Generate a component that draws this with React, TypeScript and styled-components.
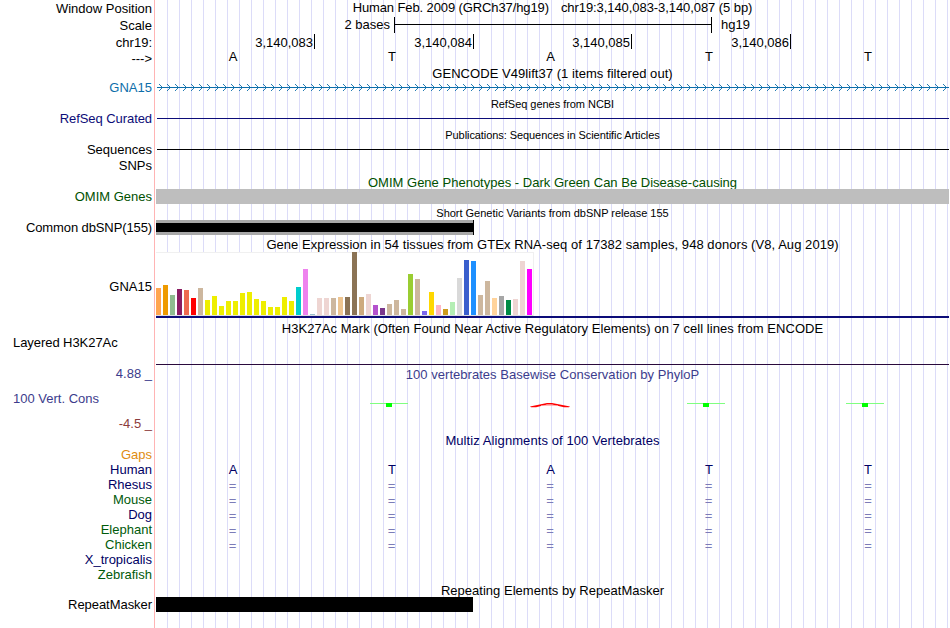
import React from 'react';
import styled, { createGlobalStyle } from 'styled-components';

const GlobalStyle = createGlobalStyle`
  body {
    margin: 0;
    background: #fff;
    overflow: hidden;
  }
`;

const COLORS = {
  gencode: '#0c6eaa',
  navy: '#0c0c78',
  species: '#000064',
  green: '#005a0a',
  omim: '#005000',
  gaps: '#e08c10',
  phylo: '#3c3c8c',
  phyloNeg: '#8c3c3c',
};

const Browser = styled.main`
  display: grid;
  grid-template-columns: 154px 1px 1px 793px;
  width: 950px;
  height: 628px;
  font: 13px/15px 'Liberation Sans', Arial, sans-serif;
  color: #000;
  white-space: pre;
`;

const LabelColumn = styled.div`
  display: flex;
  flex-direction: column;
`;

const Divider = styled.div`
  background: #ffb4b4;
`;

const TrackColumn = styled.div`
  grid-column: 4;
  display: flex;
  flex-direction: column;
  min-width: 0;
  background: repeating-linear-gradient(90deg, transparent 0 11px, #dcdcf8 11px 12px);
`;

const Label = styled.div<{ $gap?: number; $color?: string; $left?: boolean; $spacing?: number }>`
  flex: none;
  height: 15px;
  margin-top: ${(p) => p.$gap ?? 0}px;
  padding: ${(p) => (p.$left ? '0 0 0 13px' : '0 2px 0 0')};
  text-align: ${(p) => (p.$left ? 'left' : 'right')};
  letter-spacing: ${(p) => p.$spacing ?? 0}px;
  color: ${(p) => p.$color ?? '#000'};
`;

const Track = styled.section<{ $h: number; $top?: number }>`
  flex: none;
  display: flex;
  flex-direction: column;
  box-sizing: border-box;
  height: ${(p) => p.$h}px;
  padding-top: ${(p) => p.$top ?? 0}px;
`;

const Title = styled.div<{ $color?: string; $small?: boolean; $spacing?: number; $h?: number }>`
  flex: none;
  height: ${(p) => p.$h ?? 15}px;
  text-align: center;
  font-size: ${(p) => (p.$small ? 11 : 13)}px;
  letter-spacing: ${(p) => p.$spacing ?? 0}px;
  color: ${(p) => p.$color ?? '#000'};
`;

const PositionTitle = styled.div`
  display: flex;
  justify-content: center;
  gap: 12px;
  height: 17px;
`;

const PositionPart = styled.span<{ $spacing: number }>`
  letter-spacing: ${(p) => p.$spacing}px;
`;

const ScaleRow = styled.div`
  display: flex;
  height: 17px;
`;

const ScaleText = styled.span`
  width: 234px;
  margin-right: 4px;
  text-align: right;
`;

const ScaleBar = styled.div`
  box-sizing: border-box;
  width: 318px;
  height: 16px;
  margin-right: 9px;
  border: solid #000;
  border-width: 0 1px;
  background: linear-gradient(#000, #000) 0 7px / 100% 1px no-repeat;
`;

const BaseGrid = styled.div<{ $color?: string }>`
  flex: none;
  display: grid;
  grid-template-columns: 159px 159px 158px 159px 158px;
  height: 15px;
  color: ${(p) => p.$color ?? '#000'};
`;

const Coordinate = styled.div<{ $tick: boolean }>`
  box-sizing: border-box;
  padding: 2px 1px 0 0;
  text-align: right;
  line-height: 13px;
  border-right: ${(p) => (p.$tick ? '1px solid #000' : 'none')};
`;

const Base = styled.div`
  padding-right: 5px;
  text-align: center;

  &:last-child {
    padding-right: 4px;
  }
`;

const Match = styled(Base)`
  padding: 2px 6px 0 0;
  line-height: 13px;
`;

const Line = styled.div<{ $color: string; $inset?: number }>`
  flex: none;
  height: 1px;
  margin-left: ${(p) => p.$inset ?? 0}px;
  background: ${(p) => p.$color};
`;

const OmimBar = styled.div`
  height: 15px;
  background: #bebebe;
`;

const SnpBar = styled.div`
  box-sizing: border-box;
  width: 318px;
  height: 15px;
  border-right: 1px solid #000;
  background: linear-gradient(#a8a8a8 3px, #000 3px 12px, #a8a8a8 12px);
`;

const RepeatBar = styled.div`
  width: 317px;
  height: 15px;
  background: #000;
`;

const Expression = styled.div`
  box-sizing: border-box;
  display: flex;
  align-items: flex-end;
  gap: 2px;
  width: 378px;
  height: 64px;
  padding-bottom: 1px;
  background: #fff;
  box-shadow: inset 0 1px #f0f0f0, inset -1px 0 #f0f0f0, inset 0 -1px #dcdce0;
`;

const Tissue = styled.div<{ $h: number; $color: string }>`
  width: 5px;
  height: ${(p) => p.$h}px;
  background: ${(p) => p.$color};
`;

const ExpressionBase = styled.div`
  height: 2px;
  background: #0c0c78;
`;

const Drawing = styled.svg`
  flex: none;
  display: block;
`;

const TISSUES: [number, string][] = [
  [27, '#ffa54f'], [30, '#ee9a00'], [20, '#8fbc8f'], [26, '#8b1c62'], [25, '#ee6a50'],
  [17, '#ff0000'], [27, '#cdb79e'], [15, '#eeee00'], [19, '#eeee00'], [9, '#eeee00'],
  [14, '#eeee00'], [14, '#eeee00'], [22, '#eeee00'], [23, '#eeee00'], [16, '#eeee00'],
  [14, '#eeee00'], [8, '#eeee00'], [8, '#eeee00'], [18, '#eeee00'], [14, '#eeee00'],
  [28, '#00cdcd'], [46, '#ee82ee'], [1, '#9ac0cd'], [17, '#eed5d2'], [17, '#eed5d2'],
  [17, '#cdb79e'], [18, '#eec591'], [18, '#8b7355'], [63, '#8b7355'], [18, '#cdaa7d'],
  [21, '#eed5d2'], [10, '#b452cd'], [7, '#7a378b'], [11, '#cdb79e'], [15, '#cdb79e'],
  [6, '#cdb79e'], [41, '#9acd32'], [36, '#cdb79e'], [4, '#7a67ee'], [23, '#ffd700'],
  [10, '#ffb6c1'], [6, '#cd9b1d'], [13, '#b4eeb4'], [37, '#d9d9d9'], [55, '#3a5fcd'],
  [54, '#1e90ff'], [20, '#cdb79e'], [34, '#cdb79e'], [17, '#ffd39b'], [19, '#a6a6a6'],
  [15, '#008b45'], [16, '#eed5d2'], [54, '#eed5d2'], [46, '#ff00ff'],
];

const BASES = ['A', 'T', 'A', 'T', 'T'];
const COORDINATES = ['3,140,083', '3,140,084', '3,140,085', '3,140,086', ''];
const ALIGNED = ['Rhesus', 'Mouse', 'Dog', 'Elephant', 'Chicken'];

const Strand = () => (
  <Drawing width="793" height="7" viewBox="0 0 793 7" fill="none" stroke={COLORS.gencode}>
    <path d="M1 3.5H793" shapeRendering="crispEdges" />
    {Array.from({ length: 99 }, (_, i) => (
      <path key={i} d={`M${3 + i * 8} 0l3.5 3.5l-3.5 3.5`} strokeWidth=".9" />
    ))}
  </Drawing>
);

const Conservation = () => (
  <Drawing width="793" height="5" viewBox="0 0 793 5">
    {[214, 531, 690].map((x) => (
      <g key={x} shapeRendering="crispEdges">
        <rect x={x} width="38" height="1" fill="#80ff80" />
        <rect x={x + 16} width="6" height="4" fill="#00ff00" />
      </g>
    ))}
    <path d="M374 3.6L391 0H396L414 3.6L413 4.2H408L396 1.6H391L380 4.2H375Z" fill="#f00" />
    <path d="M385 2.5H402" stroke="#ff9c9c" strokeWidth=".7" />
  </Drawing>
);

const Bases = ({ color }: { color?: string }) => (
  <BaseGrid $color={color}>
    {BASES.map((b, i) => (
      <Base key={i}>{b}</Base>
    ))}
  </BaseGrid>
);

export default function App() {
  return (
    <>
      <GlobalStyle />
      <Browser>
        <LabelColumn>
          <Label $gap={1}>Window Position</Label>
          <Label $gap={2}>Scale</Label>
          <Label $gap={2}>chr19:</Label>
          <Label $gap={1}>{'--->'}</Label>
          <Label $gap={14} $color={COLORS.gencode}>GNA15</Label>
          <Label $gap={16} $color={COLORS.navy} $spacing={-0.07}>RefSeq Curated</Label>
          <Label $gap={16}>Sequences</Label>
          <Label $gap={1}>SNPs</Label>
          <Label $gap={16} $color={COLORS.omim}>OMIM Genes</Label>
          <Label $gap={16} $spacing={-0.11}>Common dbSNP(155)</Label>
          <Label $gap={44}>GNA15</Label>
          <Label $gap={41} $left $spacing={-0.06}>Layered H3K27Ac</Label>
          <Label $gap={16} $color={COLORS.phylo}>4.88 _</Label>
          <Label $gap={10} $color={COLORS.phylo} $left>100 Vert. Cons</Label>
          <Label $gap={10} $color={COLORS.phyloNeg}>-4.5 _</Label>
          <Label $gap={16} $color={COLORS.gaps}>Gaps</Label>
          <Label $color={COLORS.species}>Human</Label>
          <Label $color={COLORS.species}>Rhesus</Label>
          <Label $color={COLORS.green}>Mouse</Label>
          <Label $color={COLORS.species}>Dog</Label>
          <Label $color={COLORS.green}>Elephant</Label>
          <Label $color={COLORS.green}>Chicken</Label>
          <Label $color={COLORS.species}>X_tropicalis</Label>
          <Label $color={COLORS.green}>Zebrafish</Label>
          <Label $gap={15} $spacing={-0.05}>RepeatMasker</Label>
        </LabelColumn>
        <Divider />
        <TrackColumn>
          <Track $h={66}>
            <PositionTitle>
              <PositionPart $spacing={-0.11}>Human Feb. 2009 (GRCh37/hg19)</PositionPart>
              <PositionPart $spacing={-0.07}>chr19:3,140,083-3,140,087 (5 bp)</PositionPart>
            </PositionTitle>
            <ScaleRow>
              <ScaleText>2 bases</ScaleText>
              <ScaleBar />
              <span>hg19</span>
            </ScaleRow>
            <BaseGrid>
              {COORDINATES.map((c, i) => (
                <Coordinate key={i} $tick={c !== ''}>{c}</Coordinate>
              ))}
            </BaseGrid>
            <Bases />
          </Track>
          <Track $h={30}>
            <Title $spacing={0.05}>GENCODE V49lift37 (1 items filtered out)</Title>
            <Track $h={10} $top={3}>
              <Strand />
            </Track>
          </Track>
          <Track $h={31} $top={1}>
            <Title $small $spacing={-0.04}>RefSeq genes from NCBI</Title>
            <Track $h={8} $top={6}>
              <Line $color={COLORS.navy} $inset={1} />
            </Track>
          </Track>
          <Track $h={48} $top={1}>
            <Title $small $spacing={-0.07}>Publications: Sequences in Scientific Articles</Title>
            <Track $h={8} $top={6}>
              <Line $color="#000" $inset={1} />
            </Track>
          </Track>
          <Track $h={29}>
            <Title $color={COLORS.omim} $spacing={0.01} $h={14}>
              OMIM Gene Phenotypes - Dark Green Can Be Disease-causing
            </Title>
            <OmimBar />
          </Track>
          <Track $h={33} $top={2}>
            <Title $small $h={14} $spacing={-0.02}>Short Genetic Variants from dbSNP release 155</Title>
            <SnpBar />
          </Track>
          <Track $h={81}>
            <Title $spacing={0.055}>
              Gene Expression in 54 tissues from GTEx RNA-seq of 17382 samples, 948 donors (V8, Aug 2019)
            </Title>
            <Expression>
              {TISSUES.map(([h, color], i) => (
                <Tissue key={i} $h={h} $color={color} />
              ))}
            </Expression>
            <ExpressionBase />
          </Track>
          <Track $h={49} $top={3}>
            <Title $spacing={0.045}>
              H3K27Ac Mark (Often Found Near Active Regulatory Elements) on 7 cell lines from ENCODE
            </Title>
            <Track $h={29} $top={28}>
              <Line $color="#2a0a3c" />
            </Track>
          </Track>
          <Track $h={66}>
            <Title $color={COLORS.phylo} $spacing={0.03}>100 vertebrates Basewise Conservation by PhyloP</Title>
            <Track $h={50} $top={21}>
              <Conservation />
            </Track>
          </Track>
          <Track $h={150}>
            <Title $color={COLORS.species} $spacing={0.09}>Multiz Alignments of 100 Vertebrates</Title>
            <Track $h={105} $top={14}>
              <Bases color={COLORS.species} />
              {ALIGNED.map((name) => (
                <BaseGrid key={name} $color="#7c7cb8">
                  {BASES.map((_, i) => (
                    <Match key={i}>=</Match>
                  ))}
                </BaseGrid>
              ))}
            </Track>
          </Track>
          <Track $h={45}>
            <Title $spacing={0.02} $h={14}>Repeating Elements by RepeatMasker</Title>
            <RepeatBar />
          </Track>
        </TrackColumn>
      </Browser>
    </>
  );
}
